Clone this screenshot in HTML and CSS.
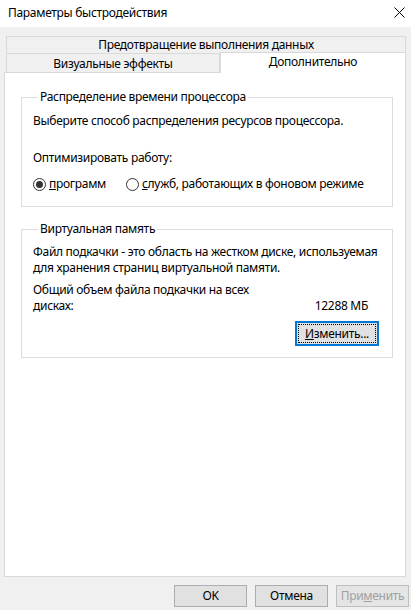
FILE: index.html
```html
<!DOCTYPE html>
<html lang="ru">
<head>
<meta charset="utf-8">
<title>Параметры быстродействия</title>
<link rel="stylesheet" href="styles.css">
</head>
<body>
<div class="window">
  <div class="titlebar">
    <span class="title">Параметры быстродействия</span>
    <span class="close">
      <svg width="11" height="11" viewBox="0 0 11 11"><path d="M0.5 0.5 L10.5 10.5 M10.5 0.5 L0.5 10.5" stroke="#000" stroke-width="1" fill="none"/></svg>
    </span>
  </div>
  <div class="body">
    <div class="tabs">
      <div class="tab-row">
        <div class="tab tab-wide">Предотвращение выполнения данных</div>
      </div>
      <div class="tab-row">
        <div class="tab tab-visual">Визуальные эффекты</div>
        <div class="tab tab-active">Дополнительно</div>
      </div>
    </div>
    <div class="panel">
      <fieldset class="group group-cpu">
        <legend>Распределение времени процессора</legend>
        <p class="line intro">Выберите способ распределения ресурсов процессора.</p>
        <p class="line optimize">Оптимизировать работу:</p>
        <div class="radios">
          <label class="radio"><span class="radio-circle checked"></span><span><u>п</u>рограмм</span></label>
          <label class="radio"><span class="radio-circle"></span><span><u>с</u>лужб, работающих в фоновом режиме</span></label>
        </div>
      </fieldset>
      <fieldset class="group group-vm">
        <legend>Виртуальная память</legend>
        <p class="line desc">Файл подкачки - это область на жестком диске, используемая для хранения страниц виртуальной памяти.</p>
        <div class="total">
          <span class="total-label">Общий объем файла подкачки на всех дисках:</span>
          <span class="total-value">12288 МБ</span>
        </div>
        <div class="change-row">
          <button class="btn btn-focus"><span class="focus-rect"><u>И</u>зменить...</span></button>
        </div>
      </fieldset>
    </div>
    <div class="footer">
      <button class="btn">OK</button>
      <button class="btn">Отмена</button>
      <button class="btn btn-disabled">При<u>м</u>енить</button>
    </div>
  </div>
</div>
</body>
</html>
```

FILE: styles.css
```css
* { box-sizing: border-box; }
html, body { margin: 0; padding: 0; }
body {
  width: 411px;
  height: 610px;
  background: #f0f0f0;
  font-family: "Noto Sans", "Open Sans", sans-serif;
  font-size: 12px;
  letter-spacing: -0.3px;
  color: #000;
  overflow: hidden;
}
.window {
  display: flex;
  flex-direction: column;
  height: 610px;
}
.titlebar {
  height: 27px;
  background: #fff;
  display: flex;
  align-items: center;
  justify-content: space-between;
  padding: 0 6px 2px 8px;
}
.title { line-height: 16px; }
.close { display: flex; align-items: center; }
.close svg { display: block; }

.body {
  flex: 1;
  display: flex;
  flex-direction: column;
  padding: 0 5px 0 4px;
}
.tabs {
  padding: 9px 0 0 2px;
}
.tab-row {
  display: flex;
  height: 17px;
}
.tab-row + .tab-row { height: 19px; }
.tab {
  border: 1px solid #d9d9d9;
  border-bottom: none;
  text-align: center;
  background: #f0f0f0;
  white-space: nowrap;
}
.tab-wide {
  width: 401px;
  height: 17px;
  line-height: 16px;
}
.tab-visual {
  width: 214px;
  height: 19px;
  line-height: 19px;
}
.tab-active {
  width: 186px;
  height: 21px;
  margin-top: -1px;
  line-height: 18px;
  background: #fff;
  position: relative;
  z-index: 1;
}

.panel {
  flex: 1;
  background: #fff;
  border: 1px solid #d9d9d9;
  padding: 16px 12px 0 16px;
}
.group {
  margin: 0;
  border: 1px solid #dcdcdc;
  padding: 0 13px 0 11px;
  min-width: 0;
}
.group legend {
  padding: 0 2px;
  margin-left: 5px;
  line-height: 16px;
}
.line {
  margin: 0;
  line-height: 16px;
}
.intro { margin-top: 8px; }
.optimize { margin-top: 21px; }
.radios {
  display: flex;
  gap: 20px;
  margin-top: 10px;
  padding-bottom: 14px;
  line-height: 16px;
}
.radio {
  display: flex;
  align-items: center;
  gap: 3px;
}
.radio-circle {
  width: 13px;
  height: 13px;
  border: 1px solid #333;
  border-radius: 50%;
  display: flex;
  align-items: center;
  justify-content: center;
  background: #fff;
}
.radio-circle.checked::after {
  content: "";
  width: 7px;
  height: 7px;
  border-radius: 50%;
  background: #333;
}

.group-vm { margin-top: 14px; }
.desc { margin-top: 7px; }
.total {
  display: flex;
  justify-content: space-between;
  align-items: flex-end;
  margin-top: 6px;
  line-height: 16px;
}
.total-label { width: 230px; }
.total-value { margin-right: 11px; }
.change-row {
  display: flex;
  justify-content: flex-end;
  margin-top: 7px;
  padding-bottom: 11px;
}

.btn {
  font-family: inherit;
  font-size: 12px;
  letter-spacing: -0.3px;
  color: #000;
  background: #e1e1e1;
  border: 1px solid #adadad;
  width: 73px;
  height: 22px;
  padding: 0;
  line-height: 16px;
}
.btn-focus {
  width: 84px;
  height: 25px;
  border: 2px solid #0078d7;
  padding: 1px;
  display: flex;
}
.focus-rect {
  flex: 1;
  border: 1px dotted #000;
  display: flex;
  align-items: center;
  justify-content: center;
}
.btn-disabled {
  color: #a0a0a0;
  border-color: #bfbfbf;
  background: #e5e5e5;
}
.footer {
  display: flex;
  justify-content: flex-end;
  gap: 8px;
  padding: 8px 0 0;
  margin-right: -3px;
  height: 33px;
}
```
